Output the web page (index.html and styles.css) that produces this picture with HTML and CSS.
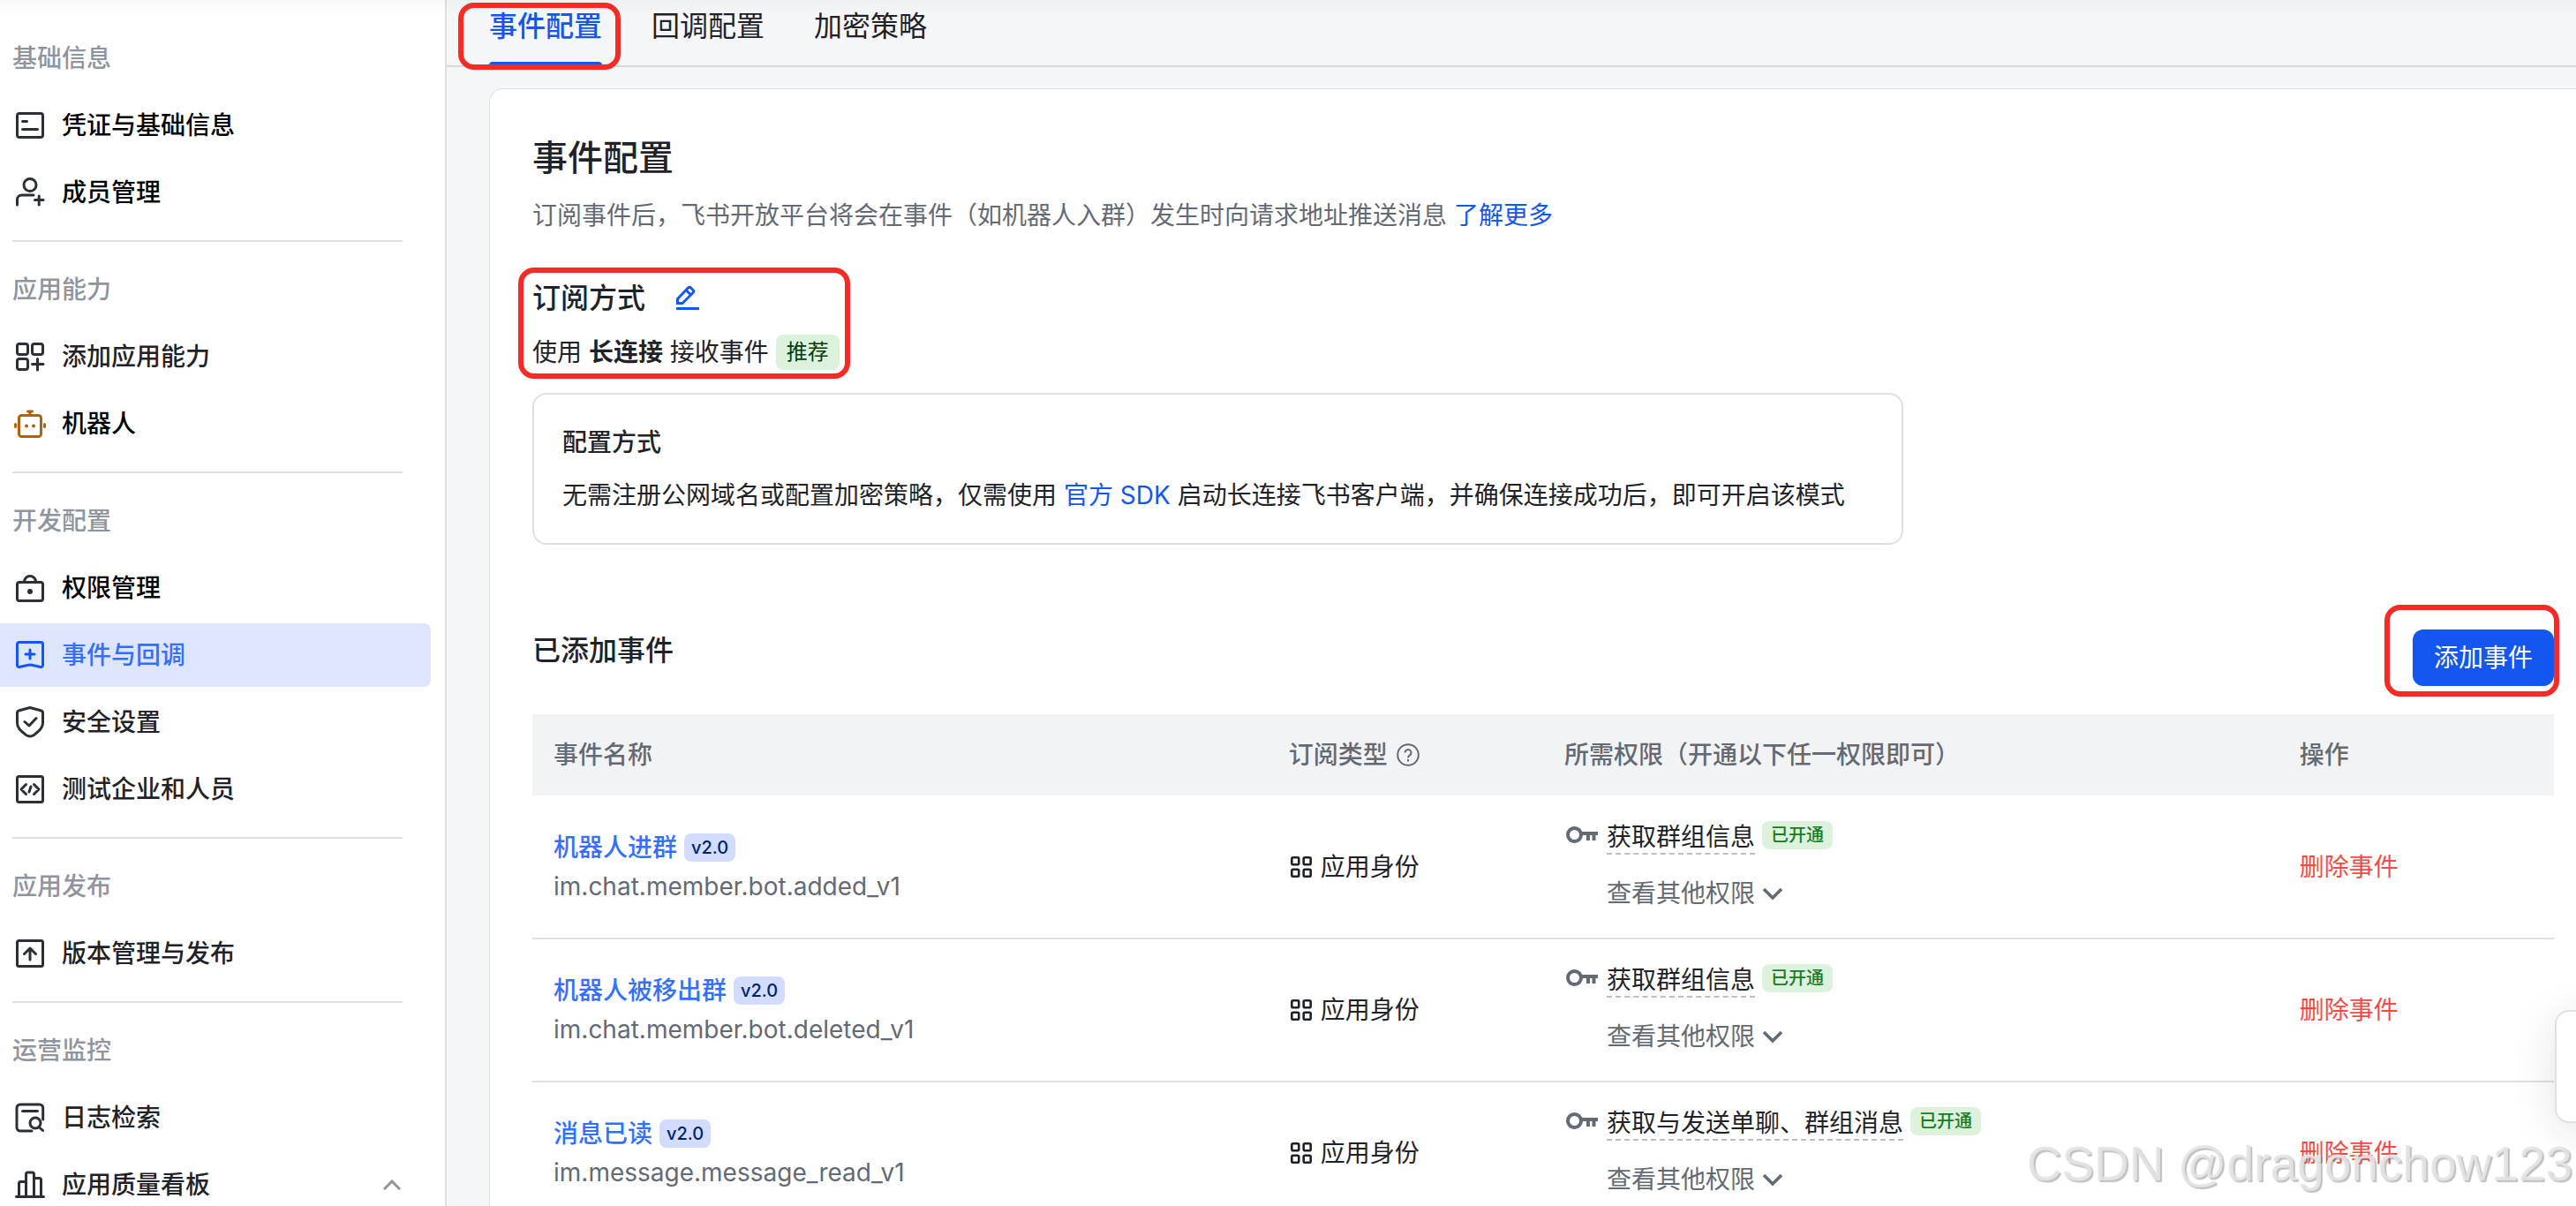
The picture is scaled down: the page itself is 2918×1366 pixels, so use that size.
FILE: index.html
```html
<!DOCTYPE html>
<html lang="zh-CN">
<head>
<meta charset="utf-8">
<title>事件与回调</title>
<link rel="stylesheet" href="styles.css">
</head>
<body>
<svg class="sprite" aria-hidden="true">
  <symbol id="apps" viewBox="0 0 24 24"><g fill="none" stroke="currentColor" stroke-width="2.600"><rect x="1.300" y="1.300" width="8" height="8" rx="1.500"/><rect x="14.700" y="1.300" width="8" height="8" rx="1.500"/><rect x="1.300" y="14.700" width="8" height="8" rx="1.500"/><rect x="14.700" y="14.700" width="8" height="8" rx="1.500"/></g></symbol>
  <symbol id="key" viewBox="0 0 40 28"><g fill="none" stroke="currentColor" stroke-width="4"><circle cx="11.500" cy="15.500" r="7.500"/><path d="M19 14h19M27 15v7M33.500 15v7"/></g></symbol>
  <symbol id="down" viewBox="0 0 24 24"><path d="M2 7l10 10L22 7" fill="none" stroke="currentColor" stroke-width="3.600"/></symbol>
</svg>
<div class="app">
  <nav class="sidebar" aria-label="应用菜单">
    <section class="group">
      <h2 class="group-title">基础信息</h2>
      <a class="item" href="#"><svg class="icon" viewBox="0 0 36 36"><rect x="3.500" y="4.500" width="29" height="27" rx="2.500"/><path d="M9.500 13.500h5M9.500 22.500h17"/></svg>凭证与基础信息</a>
      <a class="item" href="#"><svg class="icon" viewBox="0 0 36 36"><circle cx="18" cy="9.500" r="7"/><path d="M3.500 32v-6a5 5 0 0 1 5-5H22M23.500 26.500h9.500M28.200 22v10"/></svg>成员管理</a>
    </section>
    <section class="group">
      <h2 class="group-title">应用能力</h2>
      <a class="item soft" href="#"><svg class="icon" viewBox="0 0 36 36"><rect x="3.500" y="3.500" width="12" height="12" rx="2.500"/><rect x="20.500" y="3.500" width="12" height="12" rx="2.500"/><rect x="3.500" y="20.500" width="12" height="12" rx="2.500"/><path d="M20.500 26.500h12.500M26.500 20.500v12.500"/></svg>添加应用能力</a>
      <a class="item" href="#"><svg class="icon robot" viewBox="0 0 36 36"><rect x="5.500" y="8.500" width="25" height="24" rx="3"/><path d="M1.500 18.500v3M34.500 18.500v3M15.500 4h5M18 4v4"/><circle class="dot" cx="14" cy="20.500" r="2"/><circle class="dot" cx="22" cy="20.500" r="2"/></svg>机器人</a>
    </section>
    <section class="group">
      <h2 class="group-title">开发配置</h2>
      <a class="item" href="#"><svg class="icon" viewBox="0 0 36 36"><rect x="3.500" y="11.500" width="29" height="21" rx="2.500"/><path d="M11.500 11a6.500 6.500 0 0 1 13 0"/><circle class="dot" cx="18" cy="22" r="3"/></svg>权限管理</a>
      <a class="item active" href="#" aria-current="page"><svg class="icon" viewBox="0 0 36 36"><path d="M5.500 3.500h25a2 2 0 0 1 2 2v24a2 2 0 0 1-2.500 2L21 29.500q-3-.8-6 0l-9 2a2 2 0 0 1-2.500-2v-24a2 2 0 0 1 2-2zM18 12v10M13 17h10"/></svg>事件与回调</a>
      <a class="item soft" href="#"><svg class="icon" viewBox="0 0 36 36"><path d="M18 1.500l12 3.300a3 3 0 0 1 2.500 3V19c0 6-5 9.500-10 13.500q-4.500 3-9 0C8.500 28.500 3.500 25 3.500 19V7.800a3 3 0 0 1 2.500-3zM12 17.500l5 4.500 8-8.500"/></svg>安全设置</a>
      <a class="item soft" href="#"><svg class="icon" viewBox="0 0 36 36"><rect x="3.500" y="3.500" width="29" height="29" rx="2"/><path d="M13.500 12.500L8 18l5.500 5.500M22.500 12.500L28 18l-5.500 5.500M19 15l-2 6"/></svg>测试企业和人员</a>
    </section>
    <section class="group">
      <h2 class="group-title">应用发布</h2>
      <a class="item soft" href="#"><svg class="icon" viewBox="0 0 36 36"><rect x="3.500" y="3.500" width="29" height="29" rx="2"/><path d="M18 25V12.500M11.500 18.500l6.500-6.500 6.500 6.500"/></svg>版本管理与发布</a>
    </section>
    <section class="group">
      <h2 class="group-title">运营监控</h2>
      <a class="item soft" href="#"><svg class="icon" viewBox="0 0 36 36"><path d="M32.700 20V7a4 4 0 0 0-4-4H7a4 4 0 0 0-4 4v22a4 4 0 0 0 4 4h13M9.500 10.500h17M28 28.500l4.500 4"/><circle cx="24" cy="24" r="6"/></svg>日志检索</a>
      <a class="item soft" href="#"><svg class="icon" viewBox="0 0 36 36"><path d="M2.500 31.500h31M5.500 31V16.500a2 2 0 0 1 2-2h5.500M13.500 31V6a2 2 0 0 1 2-2h5a2 2 0 0 1 2 2v25M23 10.500h5.500a2 2 0 0 1 2 2V31"/></svg><span class="item-text">应用质量看板</span><svg class="fold" viewBox="0 0 20 12"><path d="M1 11l9-9 9 9"/></svg></a>
    </section>
  </nav>
  <main class="main">
    <div class="tabs" role="tablist">
      <button class="tab selected" role="tab" aria-selected="true">事件配置<span class="mark mark-tab"></span></button>
      <button class="tab" role="tab" aria-selected="false">回调配置</button>
      <button class="tab" role="tab" aria-selected="false">加密策略</button>
    </div>
    <div class="card">
      <h1 class="title">事件配置</h1>
      <p class="lead">订阅事件后，飞书开放平台将会在事件（如机器人入群）发生时向请求地址推送消息 <a href="#">了解更多</a></p>
      <section class="mode">
        <div class="mode-head"><h2 class="subtitle">订阅方式</h2><button class="edit" aria-label="编辑"><svg viewBox="0 0 28 30"><path d="M2.500 20.500v-5L14.500 3q1.500-1.500 3 0l2.500 2.500q1.500 1.500 0 3L8 20.500zM12.500 6l5 5M1 26.500h26"/></svg></button></div>
        <p class="mode-text">使用 <strong>长连接</strong> 接收事件<span class="badge">推荐</span></p>
        <span class="mark mark-mode"></span>
      </section>
      <section class="tip">
        <h3 class="tip-title">配置方式</h3>
        <p class="tip-text">无需注册公网域名或配置加密策略，仅需使用 <a href="#">官方 SDK</a> 启动长连接飞书客户端，并确保连接成功后，即可开启该模式</p>
      </section>
      <div class="list-head">
        <h2 class="subtitle">已添加事件</h2>
        <div class="add-wrap"><button class="add">添加事件</button><span class="mark mark-add"></span></div>
      </div>
      <table class="events">
        <thead>
          <tr><th class="wide">事件名称</th><th class="narrow"><span class="with-icon">订阅类型<svg class="help" viewBox="0 0 26 26"><circle cx="13" cy="13" r="11.800"/><path d="M9.500 10.500a3.500 3.500 0 1 1 5.500 2.900q-2 1.300-2 3M13 18v2.500"/></svg></span></th><th class="wide">所需权限（开通以下任一权限即可）</th><th class="narrow">操作</th></tr>
        </thead>
        <tbody>
          <tr>
            <td><div class="name"><a href="#">机器人进群</a><span class="version">v2.0</span></div><div class="code">im.chat.member.bot.added_v1</div></td>
            <td><span class="identity"><svg class="apps"><use href="#apps"/></svg>应用身份</span></td>
            <td><div class="scope"><svg class="key"><use href="#key"/></svg><span class="scope-name">获取群组信息</span><span class="state">已开通</span></div><button class="more">查看其他权限<svg class="down"><use href="#down"/></svg></button></td>
            <td><button class="delete">删除事件</button></td>
          </tr>
          <tr>
            <td><div class="name"><a href="#">机器人被移出群</a><span class="version">v2.0</span></div><div class="code">im.chat.member.bot.deleted_v1</div></td>
            <td><span class="identity"><svg class="apps"><use href="#apps"/></svg>应用身份</span></td>
            <td><div class="scope"><svg class="key"><use href="#key"/></svg><span class="scope-name">获取群组信息</span><span class="state">已开通</span></div><button class="more">查看其他权限<svg class="down"><use href="#down"/></svg></button></td>
            <td><button class="delete">删除事件</button></td>
          </tr>
          <tr>
            <td><div class="name"><a href="#">消息已读</a><span class="version">v2.0</span></div><div class="code">im.message.message_read_v1</div></td>
            <td><span class="identity"><svg class="apps"><use href="#apps"/></svg>应用身份</span></td>
            <td><div class="scope"><svg class="key"><use href="#key"/></svg><span class="scope-name">获取与发送单聊、群组消息</span><span class="state">已开通</span></div><button class="more">查看其他权限<svg class="down"><use href="#down"/></svg></button></td>
            <td><button class="delete">删除事件</button></td>
          </tr>
        </tbody>
      </table>
    </div>
  </main>
</div>
<aside class="float" aria-label="快捷工具"></aside>
<div class="watermark">CSDN @dragonchow123</div>
</body>
</html>
```
FILE: styles.css
```css
* {
  box-sizing: border-box;
}

body {
  margin: 0;
  height: 100vh;
  overflow: hidden;
  font-family: Inter, "Noto Sans CJK SC", sans-serif;
  font-size: 28px;
  line-height: 40px;
  color: #1f2329;
  background: #f5f6f8;
}

h1, h2, h3, p {
  margin: 0;
  font-weight: 500;
}

p {
  font-weight: 400;
}

a {
  color: #1456f0;
  text-decoration: none;
}

button {
  font: inherit;
  color: inherit;
  padding: 0;
  border: 0;
  background: none;
  cursor: pointer;
}

.sprite {
  position: absolute;
  width: 0;
  height: 0;
}

.app {
  display: flex;
  min-height: 100vh;
}

.app::before {
  content: "";
  position: absolute;
  top: 0;
  left: 0;
  right: 0;
  height: 16px;
  background: linear-gradient(rgba(31, 35, 41, 0.03), rgba(31, 35, 41, 0));
}

/* Sidebar */
.sidebar {
  flex: none;
  width: 506px;
  padding-top: 30px;
  border-right: 2px solid #dedfe0;
  background: #fff;
}

.group {
  display: flex;
  flex-direction: column;
  gap: 4px;
}

.group + .group::before {
  content: "";
  height: 2px;
  margin: 18px 48px 14px 14px;
  background: #dedfe0;
}

.group-title {
  padding-left: 14px;
  font-size: 28px;
  line-height: 72px;
  color: #8f959e;
}

.item {
  display: flex;
  align-items: center;
  gap: 18px;
  height: 72px;
  margin-right: 16px;
  padding-left: 16px;
  border-radius: 0 8px 8px 0;
  font-weight: 500;
  color: #000;
}

.item.soft {
  color: #1f2329;
}

.item.active {
  color: #3370ff;
  background: #dde5ff;
}

.icon {
  flex: none;
  width: 36px;
  height: 36px;
  fill: none;
  stroke: #2b2f36;
  stroke-width: 3;
  stroke-linecap: round;
  stroke-linejoin: round;
}

.icon .dot {
  fill: #2b2f36;
  stroke: none;
}

.active .icon {
  stroke: #1456f0;
}

.icon.robot {
  stroke: #b26206;
}

.robot .dot {
  fill: #b26206;
}

.item-text {
  flex: 1;
}

.fold {
  width: 20px;
  height: 12px;
  margin-right: 34px;
  fill: none;
  stroke: #8f959e;
  stroke-width: 3;
}

/* Main column */
.main {
  flex: 1;
  display: flex;
  flex-direction: column;
  min-width: 0;
  padding-left: 48px;
}

.tabs {
  display: flex;
  gap: 56px;
  height: 76px;
  margin-left: -48px;
  padding-left: 48px;
  border-bottom: 2px solid #d5d7da;
}

.tab {
  position: relative;
  height: 76px;
  padding-bottom: 16px;
  font-size: 32px;
}

.tab.selected {
  font-weight: 500;
  color: #1456f0;
}

.tab.selected::after {
  content: "";
  position: absolute;
  left: 0;
  right: 0;
  bottom: 0;
  height: 6px;
  border-radius: 4px 4px 0 0;
  background: #1456f0;
}

.card {
  flex: 1;
  margin-top: 24px;
  padding: 50px 25px 0 48px;
  border: 1px solid #dee0e3;
  border-width: 1px 0 0 1px;
  border-radius: 16px 0 0 0;
  background: #fff;
}

.title {
  font-size: 40px;
  line-height: 56px;
}

.lead {
  margin-top: 17px;
  color: #646a73;
}

.mode {
  position: relative;
  margin-top: 50px;
}

.mode-head {
  display: flex;
  align-items: center;
  gap: 34px;
}

.subtitle {
  font-size: 32px;
  line-height: 48px;
}

.edit {
  width: 28px;
  height: 30px;
  line-height: 0;
}

.edit svg {
  width: 28px;
  height: 30px;
  fill: none;
  stroke: #1456f0;
  stroke-width: 3;
}

.mode-text {
  display: flex;
  align-items: center;
  margin-top: 17px;
  white-space: pre;
}

.badge {
  margin-left: 8px;
  padding: 0 12px;
  border-radius: 8px;
  font-size: 24px;
  color: #043b08;
  background: #dcf2dd;
}

.tip {
  width: fit-content;
  margin-top: 26px;
  padding: 34px 64px 34px 32px;
  border: 2px solid #dee0e3;
  border-radius: 16px;
}

.tip-title {
  font-size: 28px;
}

.tip-text {
  margin-top: 20px;
}

.list-head {
  display: flex;
  justify-content: space-between;
  margin-top: 96px;
}

.add-wrap {
  position: relative;
}

.add {
  display: block;
  width: 160px;
  height: 64px;
  border-radius: 12px;
  color: #fff;
  background: #1456f0;
}

/* Event table */
.events {
  width: 100%;
  margin-top: 32px;
  table-layout: fixed;
  border-collapse: collapse;
}

.wide {
  width: 36.36%;
}

.narrow {
  width: 13.64%;
}

.events th {
  height: 92px;
  padding: 0 24px;
  font-weight: 500;
  text-align: left;
  color: #646a73;
  background: #f2f3f5;
}

.events td {
  height: 162px;
  padding: 0 24px;
  border-bottom: 2px solid #dedfe0;
}

.with-icon,
.identity,
.name,
.scope,
.more {
  display: flex;
  align-items: center;
  gap: 8px;
}

.with-icon,
.identity {
  gap: 10px;
}

.help {
  width: 26px;
  height: 26px;
  fill: none;
  stroke: #646a73;
  stroke-width: 2;
}

.name {
  font-weight: 500;
}

.name a {
  color: #3370ff;
}

.version,
.state {
  padding: 0 8px;
  border-radius: 8px;
  font-size: 20px;
  line-height: 32px;
  font-weight: 500;
}

.version {
  color: #002270;
  background: #d1dcff;
}

.state {
  padding: 0 10px;
  color: #1b7a23;
  background: #dcf2dd;
}

.code {
  margin-top: 4px;
  color: #646a73;
}

.apps {
  width: 24px;
  height: 24px;
}

.identity {
  padding-left: 2px;
}

.scope {
  align-items: flex-start;
}

.key {
  width: 40px;
  height: 28px;
  color: #646a73;
}

.scope-name {
  line-height: 36px;
  border-bottom: 2px dashed #bbbfc4;
}

.more {
  margin: 24px 0 0 48px;
  padding-bottom: 2px;
  color: #646a73;
}

.down {
  width: 24px;
  height: 24px;
}

.delete {
  color: #f54a45;
}

/* Overlays */
.mark {
  position: absolute;
  border: 6px solid #f52b25;
  border-radius: 18px;
  pointer-events: none;
  z-index: 2;
}

.mark-tab {
  inset: 3px -21px -3px -35px;
}

.mark-mode {
  top: -11px;
  left: -16px;
  width: 376px;
  height: 126px;
}

.mark-add {
  inset: -28px -6px -12px -32px;
}

.float {
  position: fixed;
  right: -40px;
  top: 1144px;
  width: 64px;
  height: 128px;
  border: 2px solid #dee0e3;
  border-radius: 16px;
  background: #fff;
  box-shadow: 0 8px 48px rgba(31, 35, 41, 0.12);
}

.watermark {
  position: fixed;
  right: 4px;
  bottom: 18px;
  font-family: "Liberation Sans", sans-serif;
  font-size: 55px;
  line-height: 60px;
  color: rgba(228, 228, 228, 0.9);
  text-shadow: 2px 2px 1px rgba(130, 130, 130, 0.5);
  pointer-events: none;
}
```
